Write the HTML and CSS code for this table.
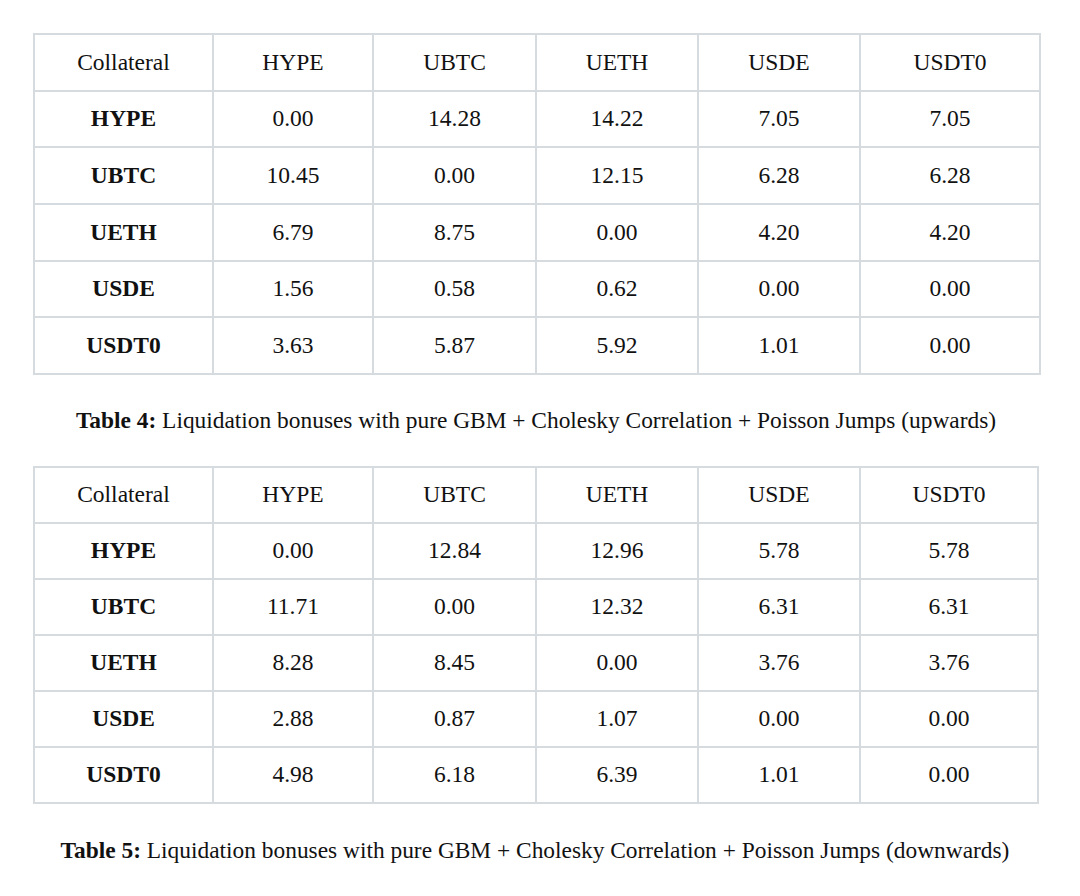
FILE: index.html
```html
<!DOCTYPE html>
<html>
<head>
<meta charset="utf-8">
<link rel="stylesheet" href="styles.css">
</head>
<body>
<div class="page">
  <table class="grid t1">
    <colgroup><col class="c1"><col class="c2"><col class="c3"><col class="c4"><col class="c5"><col class="c6"></colgroup>
    <tr><td>Collateral</td><td>HYPE</td><td>UBTC</td><td>UETH</td><td>USDE</td><td>USDT0</td></tr>
    <tr><th>HYPE</th><td>0.00</td><td>14.28</td><td>14.22</td><td>7.05</td><td>7.05</td></tr>
    <tr><th>UBTC</th><td>10.45</td><td>0.00</td><td>12.15</td><td>6.28</td><td>6.28</td></tr>
    <tr><th>UETH</th><td>6.79</td><td>8.75</td><td>0.00</td><td>4.20</td><td>4.20</td></tr>
    <tr><th>USDE</th><td>1.56</td><td>0.58</td><td>0.62</td><td>0.00</td><td>0.00</td></tr>
    <tr><th>USDT0</th><td>3.63</td><td>5.87</td><td>5.92</td><td>1.01</td><td>0.00</td></tr>
  </table>
  <p class="caption cap1"><b>Table 4:</b> Liquidation bonuses with pure GBM + Cholesky Correlation + Poisson Jumps (upwards)</p>
  <table class="grid t2">
    <colgroup><col class="c1"><col class="c2"><col class="c3"><col class="c4"><col class="c5"><col class="c6b"></colgroup>
    <tr><td>Collateral</td><td>HYPE</td><td>UBTC</td><td>UETH</td><td>USDE</td><td>USDT0</td></tr>
    <tr><th>HYPE</th><td>0.00</td><td>12.84</td><td>12.96</td><td>5.78</td><td>5.78</td></tr>
    <tr><th>UBTC</th><td>11.71</td><td>0.00</td><td>12.32</td><td>6.31</td><td>6.31</td></tr>
    <tr><th>UETH</th><td>8.28</td><td>8.45</td><td>0.00</td><td>3.76</td><td>3.76</td></tr>
    <tr><th>USDE</th><td>2.88</td><td>0.87</td><td>1.07</td><td>0.00</td><td>0.00</td></tr>
    <tr><th>USDT0</th><td>4.98</td><td>6.18</td><td>6.39</td><td>1.01</td><td>0.00</td></tr>
  </table>
  <p class="caption cap2"><b>Table 5:</b> Liquidation bonuses with pure GBM + Cholesky Correlation + Poisson Jumps (downwards)</p>
</div>
</body>
</html>
```

FILE: styles.css
```css
html, body {
  margin: 0;
  padding: 0;
  background: #ffffff;
}
.page {
  padding: 33px 0 0 33px;
  font-family: "Liberation Serif", "Times New Roman", serif;
  color: #111111;
  width: 1010px;
}
.grid {
  border-collapse: collapse;
  table-layout: fixed;
  font-size: 23.5px;
}
.grid td, .grid th {
  border: 2px solid #d6dbdf;
  text-align: center;
  vertical-align: middle;
  padding: 0;
}
.grid th {
  font-weight: bold;
}
.t1 { width: 1006px; }
.t1 tr { height: 56.67px; }
.t2 { width: 1004px; }
.t2 tr { height: 56px; }
.c1 { width: 179px; }
.c2 { width: 160px; }
.c3 { width: 163px; }
.c4 { width: 162px; }
.c5 { width: 162px; }
.c6 { width: 180px; }
.c6b { width: 178px; }
.caption {
  margin: 0;
  text-align: center;
  font-size: 23.4px;
  line-height: 26px;
}
.cap1 {
  width: 1006px;
  padding: 32px 0 33px;
}
.cap2 {
  width: 1004px;
  padding: 33px 0 0;
}
```
